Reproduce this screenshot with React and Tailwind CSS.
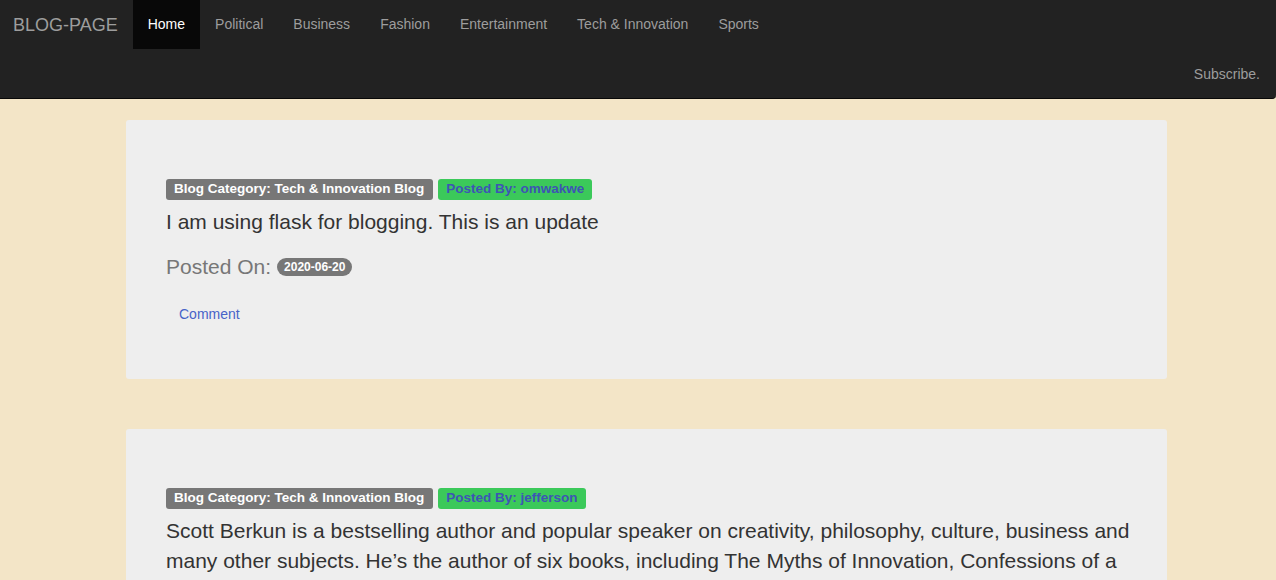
import React from "react";

const links = ["Political", "Business", "Fashion", "Entertainment", "Tech & Innovation", "Sports"];

const posts = [
  {
    category: "Tech & Innovation Blog",
    author: "omwakwe",
    body: "I am using flask for blogging. This is an update",
    date: "2020-06-20",
  },
  {
    category: "Tech & Innovation Blog",
    author: "jefferson",
    body:
      "Scott Berkun is a bestselling author and popular speaker on creativity, philosophy, culture, business and many other subjects. He\u2019s the author of six books, including The Myths of Innovation, Confessions of a Public Speaker, and The Year Without Pants. His work has appeared in the New York Times and more.",
    date: "2020-06-21",
  },
];

function Navbar() {
  return (
    <nav className="bg-[#222222] border-b border-[#080808] rounded-br-[4px] h-[99px]">
      <div className="flex items-center h-[50px]">
        <a className="pl-[13px] pr-[15px] text-[18px] leading-[50px] text-[#9d9d9d]">BLOG-PAGE</a>
        <ul className="flex h-[49px] self-start text-[14px]">
          <li className="px-[15px] leading-[49px] bg-[#080808] text-white">Home</li>
          {links.map((l) => (
            <li key={l} className="px-[15px] leading-[49px] text-[#9d9d9d]">
              {l}
            </li>
          ))}
        </ul>
      </div>
      <div className="flex justify-end h-[48px] items-center pr-[16px]">
        <span className="text-[14px] text-[#9d9d9d]">Subscribe.</span>
      </div>
    </nav>
  );
}

function Post({ post }) {
  return (
    <div className="bg-[#eeeeee] rounded-[3px] pt-[59px] pb-[48px] pl-[40px] pr-[30px] mb-[50px]">
      <div className="flex gap-[5px] items-start h-[21px] mb-[7px]">
        <span className="bg-[#777777] text-white font-bold text-[13.5px] leading-none pl-[8px] pr-[9px] pt-[3px] pb-[4px] rounded-[3px]">
          Blog Category: {post.category}
        </span>
        <span className="bg-[#3bc95a] text-[#3d55b4] font-bold text-[13.5px] leading-none px-[8px] pt-[3px] pb-[4px] rounded-[3px]">
          Posted By: {post.author}
        </span>
      </div>
      <p className="text-[21px] leading-[30px] text-[#333333] mb-[15px]">{post.body}</p>
      <p className="text-[21px] leading-[30px] text-[#777777] mb-[15px] flex items-center">
        Posted On:
        <span className="ml-[6px] bg-[#777777] text-white font-bold text-[12px] leading-none px-[7px] py-[3px] rounded-full">
          {post.date}
        </span>
      </p>
      <button className="h-[34px] px-[13px] text-[14px] text-[#4763c8]">Comment</button>
    </div>
  );
}

export default function App() {
  return (
    <div className="min-h-screen bg-[#f3e5c7]" style={{ fontFamily: '"Liberation Sans", Arial, sans-serif' }}>
      <Navbar />
      <div className="w-[1041px] ml-[126px] mt-[21px]">
        {posts.map((p, i) => (
          <Post key={i} post={p} />
        ))}
      </div>
    </div>
  );
}
